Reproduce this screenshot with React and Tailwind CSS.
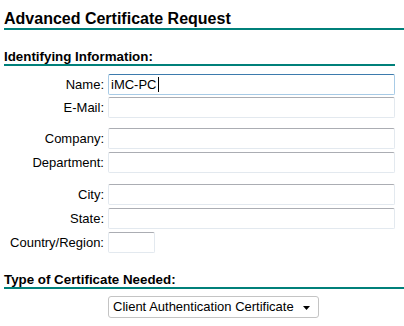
export default function App() {
  const font = { fontFamily: '"Liberation Sans", Arial, sans-serif' };
  const Field = ({ label, w = "w-[287px]", children, focused }) => (
    <div className="flex items-center h-[21px]">
      <div className="w-[100px] text-right text-[13px] leading-[15px] text-black">{label}</div>
      <div
        className={
          "ml-[4px] h-[21px] " +
          w +
          " bg-white rounded-[2px] border flex items-center pl-[2px] text-[13px] text-black " +
          (focused
            ? "border-[#a8cbe6] border-t-[#3d7bad]"
            : "border-[#e3e9ef] border-t-[#abadb3]")
        }
      >
        {children}
      </div>
    </div>
  );
  return (
    <div className="w-[404px] h-[326px] bg-white overflow-hidden pl-[4px]" style={font}>
      <div className="mt-[10px] text-[16px] leading-[18px] font-bold text-black border-b-2 border-[#00807a]">
        Advanced Certificate Request
      </div>
      <div className="mt-[19px] mr-[9px] text-[13.33px] leading-[15px] font-bold text-black border-b-2 border-[#00807a]">
        Identifying Information:
      </div>
      <div className="mt-[8px] flex flex-col">
        <div className="flex flex-col gap-[2px]">
          <Field label="Name:" focused>
            <span>iMC-PC</span>
            <span className="inline-block w-px h-[15px] bg-black ml-px"></span>
          </Field>
          <Field label="E-Mail:" />
        </div>
        <div className="flex flex-col gap-[3px] mt-[10px]">
          <Field label="Company:" />
          <Field label="Department:" />
        </div>
        <div className="flex flex-col gap-[3px] mt-[11px]">
          <Field label="City:" />
          <Field label="State:" />
          <Field label="Country/Region:" w="w-[47px]" />
        </div>
      </div>
      <div className="mt-[19px] text-[13.33px] leading-[15px] font-bold text-black border-b-2 border-[#00807a]">
        Type of Certificate Needed:
      </div>
      <div className="mt-[7px] ml-[104px] w-[211px] h-[22px] border border-[#c4c4c4] rounded-[3px] bg-white flex items-center justify-between pl-[4px] pr-[8px] text-[13px] text-black">
        <span>Client Authentication Certificate</span>
        <svg width="7" height="4" viewBox="0 0 7 4" className="mt-[1px]">
          <path d="M0 0H7L3.5 4Z" fill="#000" />
        </svg>
      </div>
    </div>
  );
}
